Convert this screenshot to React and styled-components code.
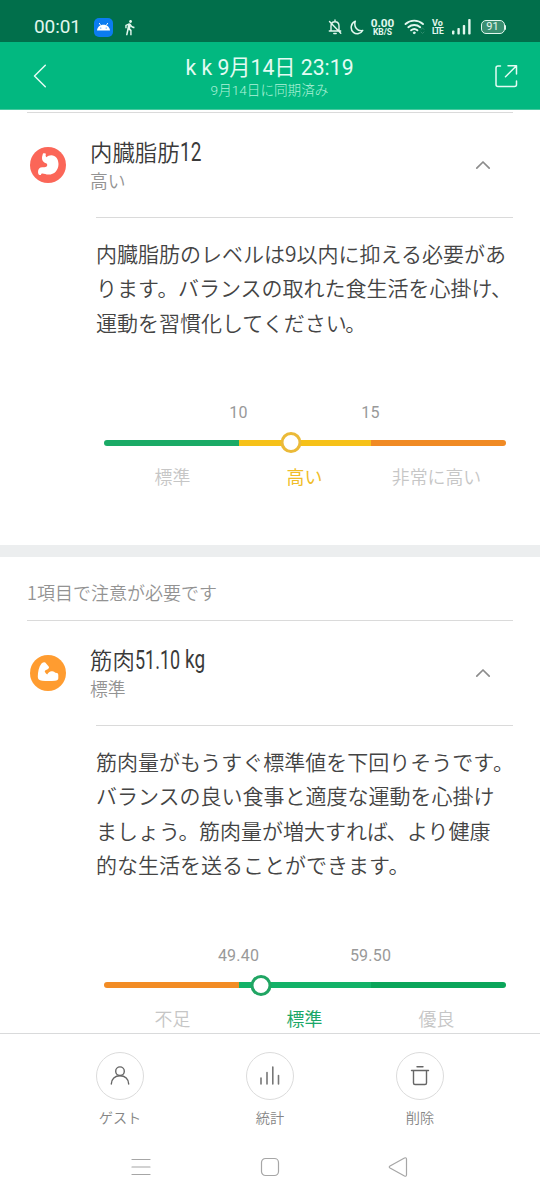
import React from 'react'
import styled, { createGlobalStyle } from 'styled-components'
import { MdDirectionsWalk } from 'react-icons/md'

const GlobalStyle = createGlobalStyle`
    * {
        box-sizing: border-box;
    }

    body {
        margin: 0;
        background: #fff;
        font-family: Roboto, 'Noto Sans CJK JP', sans-serif;
    }
`

const Screen = styled.div`
    width: 540px;
    height: 1200px;
    display: flex;
    flex-direction: column;
    overflow: hidden;
    background: #fff;
`

const StatusBar = styled.div`
    flex: none;
    height: 42px;
    display: flex;
    align-items: center;
    padding: 12px 34px 0;
    background: #016f4b;
    color: #e2f7ee;

    svg {
        display: block;
        flex: none;
    }
`

const Clock = styled.span`
    width: 60px;
    font-size: 19px;
    line-height: 22px;
    letter-spacing: -0.1px;
`

const AppBadge = styled.span`
    width: 19px;
    height: 19px;
    margin-right: 10px;
    border-radius: 5px;
    background: #0b7cf0;
    color: #fff;
`

const StatusIcons = styled.div`
    display: flex;
    align-items: center;
    margin-left: auto;
`

const StackedText = styled.div`
    display: flex;
    flex-direction: column;
    align-items: center;
    width: ${props => props.$width}px;
    margin: 0 ${props => props.$right}px 0 ${props => props.$left}px;
    font-weight: 700;
    white-space: nowrap;
`

const StackedLine = styled.span`
    font-size: ${props => props.$size}px;
    line-height: ${props => props.$height}px;
    letter-spacing: ${props => props.$spacing || 0}px;
`

const Battery = styled.span`
    width: 24px;
    height: 14px;
    margin-left: 10px;
    border: 1.5px solid #e2f7ee;
    border-radius: 5px;
    background: #3a8f71;
    font-size: 11px;
    line-height: 12px;
    text-align: center;
`

const BatteryTip = styled.span`
    width: 1.5px;
    height: 5px;
    border-radius: 0 2px 2px 0;
    background: #e2f7ee;
`

const Header = styled.header`
    flex: none;
    height: 68px;
    display: flex;
    align-items: center;
    justify-content: space-between;
    padding: 0 22px 0 32px;
    background: #02b880;
    border-bottom: 1px solid #48c9a0;
    color: #e4fbf3;
`

const HeaderText = styled.div`
    display: flex;
    flex-direction: column;
    align-items: center;
    padding: 2px 3px 0 0;
`

const HeaderTitle = styled.h1`
    margin: 0;
    font-size: 21.2px;
    line-height: 27px;
    font-weight: 400;
    white-space: nowrap;
`

const HeaderSub = styled.span`
    font-size: 13.6px;
    line-height: 19px;
    font-weight: 300;
    color: #b0f2d9;
`

const Content = styled.main`
    flex: 1;
    min-height: 0;
    overflow: hidden;
    padding-top: 2px;
`

const Divider = styled.div`
    height: 1px;
    margin: 0 27px 0 ${props => (props.$inset ? 96 : 27)}px;
    background: #dadada;
`

const Item = styled.section`
    height: ${props => props.$height}px;
`

const ItemHead = styled.div`
    height: 104px;
    display: flex;
    align-items: center;
    padding: 0 49px 0 29px;
`

const ItemIcon = styled.svg`
    width: 38px;
    height: 38px;
    margin-right: 23px;
`

const ItemText = styled.div`
    flex: 1;
    padding-bottom: 1px;
`

const ItemTitle = styled.h2`
    display: flex;
    margin: 0;
    font-family: 'Noto Sans CJK JP', sans-serif;
    font-size: 22.4px;
    line-height: 31px;
    font-weight: 350;
    color: #3a3a3a;
`

const Condensed = styled.span`
    width: ${props => props.$width}px;
    font-family: Roboto, sans-serif;
    font-size: ${props => props.$size || 26}px;
    line-height: 32px;
    font-weight: 400;
    white-space: nowrap;
    transform: scaleX(${props => props.$scale});
    transform-origin: left center;
`

const ItemStatus = styled.div`
    font-family: 'Noto Sans CJK JP', sans-serif;
    font-size: 17.8px;
    line-height: 25px;
    font-weight: 350;
    color: #939393;
`

const Advice = styled.p`
    margin: 0;
    padding: 17.5px 0 0 96px;
    font-family: 'Noto Sans CJK JP', sans-serif;
    font-size: 21px;
    line-height: 34.5px;
    font-weight: 350;
    color: #444;
    white-space: pre;
`

const Mark = styled.span`
    margin: 0 -0.5px 0 -1.5px;
`

const Gauge = styled.div`
    width: 402px;
    margin: 60.5px 0 0 103.5px;
`

const Limits = styled.div`
    display: flex;
    justify-content: center;
    height: 26px;
`

const Limit = styled.span`
    width: 132px;
    padding-top: 0.5px;
    font-size: 16px;
    line-height: 26px;
    letter-spacing: 0.2px;
    text-align: center;
    color: #999;
`

const Track = styled.div`
    position: relative;
    display: flex;
    height: 6px;
    margin-top: 14px;
`

const Segment = styled.div`
    flex: ${props => (props.$end ? '0 0 135px' : '1')};
    background: ${props => props.$color};

    &:first-child {
        border-radius: 3px 0 0 3px;
    }

    &:nth-child(3) {
        border-radius: 0 3px 3px 0;
    }
`

const Knob = styled.div`
    position: absolute;
    top: -7.5px;
    width: 21px;
    height: 21px;
    border: 3px solid ${props => props.$color};
    border-radius: 50%;
    background: #fff;
    transform: translateX(-50%);
`

const Grades = styled.div`
    display: grid;
    grid-template-columns: repeat(3, 132px);
    justify-content: center;
    margin-top: 17px;
`

const Grade = styled.span`
    font-family: 'Noto Sans CJK JP', sans-serif;
    font-size: 17.9px;
    line-height: 26px;
    font-weight: ${props => (props.$color ? 400 : 350)};
    text-align: center;
    color: ${props => props.$color || '#c6c6c6'};
`

const Gap = styled.div`
    height: 12px;
    background: #eceeef;
`

const Notice = styled.div`
    height: 63px;
    padding: 22px 27px 0;
    font-family: 'Noto Sans CJK JP', sans-serif;
    font-size: 18px;
    line-height: 26px;
    font-weight: 350;
    color: #939393;
`

const Actions = styled.footer`
    flex: none;
    display: grid;
    grid-template-columns: repeat(3, 150px);
    justify-content: center;
    height: 102px;
    padding-top: 18px;
    border-top: 1px solid #d9dadb;
`

const Action = styled.button`
    display: flex;
    flex-direction: column;
    align-items: center;
    padding: 0;
    border: none;
    background: none;
    font-family: 'Noto Sans CJK JP', sans-serif;
    font-size: 14.2px;
    line-height: 20px;
    font-weight: 350;
    color: #858585;
`

const ActionCircle = styled.span`
    display: flex;
    align-items: center;
    justify-content: center;
    width: 48px;
    height: 48px;
    margin-bottom: 7px;
    border: 1px solid #dcdcdc;
    border-radius: 50%;
`

const NavBar = styled.nav`
    flex: none;
    height: 65px;
    display: flex;
    align-items: center;
    justify-content: space-between;
    padding: 0 132px 1px 131px;
`

const stroke = { fill: 'none', stroke: 'currentColor', strokeLinecap: 'round', strokeLinejoin: 'round' }

const StomachIcon = () => (
    <ItemIcon viewBox="0 0 38 38">
        <circle cx="19" cy="19" r="18" fill="#fb6658" />
        <path
            d="M14 7.600c1-.6 2.200-.5 3 .2-.6 1.200-.5 2.400.3 3.400 1.300-1.300 3-2 5-2 4.300 0 7.200 3.600 7.200 8.800 0 6.300-4.300 10.600-9.800 10.600-2.700 0-4.500-1.200-6.300-1.200-1 0-1.400.7-1.500 1.700-1.800.2-2.900-1-2.900-3.200 0-2.900 1.700-4.600 4.300-4.700 1.800 0 3 .3 4-.4 1.200-.8 1.200-2.200.3-3.300-2.700-.4-4.700-2.600-4.600-5.400 0-1.700.6-3.100 1-4.500z"
            fill="#fff"
        />
    </ItemIcon>
)

const MuscleIcon = () => (
    <ItemIcon viewBox="0 0 38 38">
        <circle cx="19" cy="19" r="18" fill="#ff9c30" />
        <path
            d="M12.500 9.600c2-1.600 3.600-1.600 4.600-.2l2.600 3.200c.6 1 .3 1.700-.6 2.300l-2.600 1.400c-.8.5-.9 1.200-.4 1.900.5.800 1.200 1.600 2.100 2.200 1-2.200 3-3.600 5.200-3.200 1.300.2 2.200.8 2.900 1.600 1.800-.2 3 .7 3 2.200v3.200c0 1.700-1.200 2.400-3.200 2.600-4.300.4-9 .4-13 0-3-.3-4.400-1.600-4.300-4.200.1-4.600 1-9.800 3.700-13z"
            fill="#fff"
        />
    </ItemIcon>
)

const Chevron = () => (
    <svg width="16" height="10" viewBox="0 0 16 10" color="#8c8c8c" strokeWidth="1.7" {...stroke}>
        <path d="M1.800 8.200 8 2l6.200 6.200" />
    </svg>
)

const items = {
    fat: {
        icon: <StomachIcon />,
        name: '内臓脂肪',
        value: '12',
        status: '高い',
        advice: '内臓脂肪のレベルは9以内に抑える必要があ\nります。バランスの取れた食生活を心掛け、\n運動を習慣化してください。',
        limits: ['10', '15'],
        colors: ['#1aaa66', '#f6c118', '#f08a24'],
        grades: ['標準', '高い', '非常に高い'],
        active: '#f0bd28',
        knob: '#ebba38',
        position: 187.5,
        height: 432,
    },
    muscle: {
        icon: <MuscleIcon />,
        name: '筋肉',
        value: '51.10',
        unit: 'kg',
        status: '標準',
        advice: '筋肉量がもうすぐ標準値を下回りそうです。\nバランスの良い食事と適度な運動を心掛け\nましょう。筋肉量が増大すれば、より健康\n的な生活を送ることができます。',
        limits: ['49.40', '59.50'],
        colors: ['#f28c25', '#13b268', '#0ba55a'],
        grades: ['不足', '標準', '優良'],
        active: '#1ba768',
        knob: '#20a563',
        position: 157,
        height: 460,
    },
}

const BodyItem = ({ item }) => (
    <Item $height={item.height}>
        <ItemHead>
            {item.icon}
            <ItemText>
                <ItemTitle>
                    {item.name}
                    <Condensed $width={item.unit ? 50 : 22} $scale={item.unit ? 0.69 : 0.73}>{item.value}</Condensed>
                    {item.unit && <Condensed $width={22} $size={25} $scale={0.76}>{item.unit}</Condensed>}
                </ItemTitle>
                <ItemStatus>{item.status}</ItemStatus>
            </ItemText>
            <Chevron />
        </ItemHead>
        <Divider $inset />
        <Advice>
            {item.advice.split(/([。、])/).map((part, i) => (i % 2 ? <Mark key={i}>{part}</Mark> : part))}
        </Advice>
        <Gauge>
            <Limits>
                {item.limits.map(limit => <Limit key={limit}>{limit}</Limit>)}
            </Limits>
            <Track>
                {item.colors.map((color, i) => <Segment key={color} $color={color} $end={i !== 1} />)}
                <Knob $color={item.knob} style={{ left: item.position }} />
            </Track>
            <Grades>
                {item.grades.map((grade, i) => (
                    <Grade key={grade} $color={i === 1 ? item.active : undefined}>{grade}</Grade>
                ))}
            </Grades>
        </Gauge>
    </Item>
)

const App = () => {
    return (
        <Screen>
            <GlobalStyle />
            <StatusBar>
                <Clock>00:01</Clock>
                <AppBadge>
                    <svg width="19" height="19" viewBox="0 0 19 19">
                        <path d="M3 12.500c.3-3.400 2.900-5.800 6.500-5.800s6.200 2.400 6.500 5.800z" fill="#fff" />
                        <path d="m5.200 5 1.700 2.700M13.800 5l-1.700 2.700" stroke="#fff" strokeWidth=".9" />
                        <circle cx="6.800" cy="10" r=".6" fill="#0b7cf0" />
                        <circle cx="12.200" cy="10" r=".6" fill="#0b7cf0" />
                    </svg>
                </AppBadge>
                <MdDirectionsWalk size={17} style={{ marginLeft: -2 }} />
                <StatusIcons>
                    <svg width="14" height="16" viewBox="0 0 14 16" strokeWidth="1.400" {...stroke}>
                        <path d="M3 12V7c0-2.500 1.600-4.200 4-4.200S11 4.500 11 7v5M1.300 12h11.400M7 1v1.500M5.800 14.500h2.400M1.500 2.500l11.300 11.800" />
                    </svg>
                    <svg width="14" height="15" viewBox="0 0 14 15" style={{ marginLeft: 8 }} strokeWidth="1.500" {...stroke}>
                        <path d="M5.300 1.300C.6 3.200-.1 9.400 3.400 12.300c3.100 2.500 7.600 1.400 9.300-1.800C7.600 11.500 3.400 7 5.300 1.300z" />
                    </svg>
                    <StackedText $width={24} $left={7} $right={9}>
                        <StackedLine $size={11.8} $height={10}>0.00</StackedLine>
                        <StackedLine $size={8.5} $height={9}>KB/S</StackedLine>
                    </StackedText>
                    <svg width="21" height="16" viewBox="0 0 21 16" strokeWidth="1.900" {...stroke}>
                        <path d="M1.500 5c5-4.500 12.500-4.500 17.500 0M4.300 8.200c3.500-3 8.400-3 11.900 0M7.100 11.300c1.900-1.600 4.400-1.600 6.300 0" />
                        <circle cx="10.200" cy="13.800" r=".9" fill="currentColor" strokeWidth="1" />
                        <path d="m17 10.500 1.500-1.500 1.500 1.500M17 13l1.500 1.500L20 13" stroke="#3a9273" strokeWidth=".8" />
                    </svg>
                    <StackedText $width={12} $left={7} $right={8}>
                        <StackedLine $size={9} $height={8}>Vo</StackedLine>
                        <StackedLine $size={8.5} $height={8} $spacing={-0.9}>LTE</StackedLine>
                    </StackedText>
                    <svg width="19" height="16" viewBox="0 0 19 16" fill="currentColor">
                        <rect x="0" y="11.500" width="2.400" height="4" rx=".8" />
                        <rect x="5.400" y="9" width="2.400" height="6.500" rx=".8" />
                        <rect x="10.800" y="6" width="2.400" height="9.500" rx=".8" />
                        <rect x="16.200" y="0" width="2.400" height="15.500" rx=".8" />
                    </svg>
                    <Battery>91</Battery>
                    <BatteryTip />
                </StatusIcons>
            </StatusBar>
            <Header>
                <svg width="16" height="26" viewBox="0 0 16 26" strokeWidth="1.500" {...stroke}>
                    <path d="M13.300 2.300 2.500 13l10.800 10.700" />
                </svg>
                <HeaderText>
                    <HeaderTitle>k k 9月14日 23:19</HeaderTitle>
                    <HeaderSub>9月14日に同期済み</HeaderSub>
                </HeaderText>
                <svg width="24" height="24" viewBox="0 0 24 24" strokeWidth="1.500" {...stroke}>
                    <path d="M6.500 2H4Q2 2 2 4v16.500q0 2 2 2h16.500q2 0 2-2V17M14 1.800h8.500V10M22 2.300 11.500 12.800" />
                </svg>
            </Header>
            <Content>
                <Divider />
                <BodyItem item={items.fat} />
                <Gap />
                <Notice>1項目で注意が必要です</Notice>
                <Divider />
                <BodyItem item={items.muscle} />
            </Content>
            <Actions>
                <Action>
                    <ActionCircle>
                        <svg width="22" height="22" viewBox="0 0 22 22" color="#666" strokeWidth="1.400" {...stroke}>
                            <circle cx="11" cy="6.200" r="4.300" />
                            <path d="M2.300 19c0-5 3.700-8.300 8.700-8.300s8.700 3.300 8.700 8.300" />
                        </svg>
                    </ActionCircle>
                    ゲスト
                </Action>
                <Action>
                    <ActionCircle>
                        <svg width="22" height="22" viewBox="0 0 22 22" color="#777" strokeWidth="1.600" {...stroke}>
                            <path d="M2 13v6M8 7.500V19M13.800 2v17M19.500 10.500V19" />
                        </svg>
                    </ActionCircle>
                    統計
                </Action>
                <Action>
                    <ActionCircle>
                        <svg width="22" height="22" viewBox="0 0 22 22" color="#666" strokeWidth="1.400" {...stroke}>
                            <path d="M8 1.800h6M2.500 5.500h17M4.500 5.500V18q0 1.500 1.500 1.500h10q1.500 0 1.500-1.500V5.500" />
                        </svg>
                    </ActionCircle>
                    削除
                </Action>
            </Actions>
            <NavBar>
                <svg width="20" height="20" viewBox="0 0 20 20" color="#a6a6a6" strokeWidth="1.200" {...stroke}>
                    <path d="M1 2.500h18M1 10h18M1 17.500h18" />
                </svg>
                <svg width="20" height="20" viewBox="0 0 20 20" color="#a6a6a6" strokeWidth="1.200" {...stroke}>
                    <rect x="1.500" y="1.500" width="17" height="17" rx="4" />
                </svg>
                <svg width="20" height="20" viewBox="0 0 20 20" color="#a6a6a6" strokeWidth="1.200" {...stroke}>
                    <path d="M2 9q-1.500 1 0 2l14.500 8q2 .8 2-1.200V2.200q0-2-2-1.200z" />
                </svg>
            </NavBar>
        </Screen>
    )
}

export default App
